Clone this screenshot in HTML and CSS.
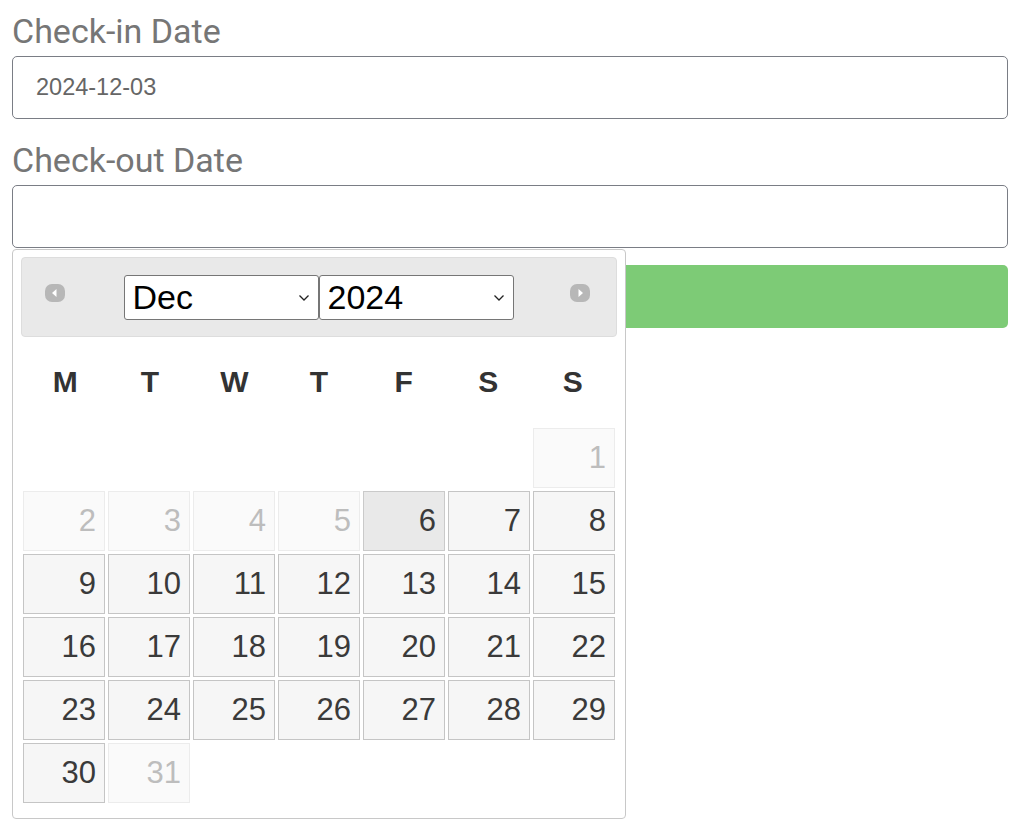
FILE: index.html
```html
<!DOCTYPE html>
<html>
<head>
    <title>Booking</title>
    <link rel="stylesheet" href="styles.css">
</head>
<body>
    <form class="booking">
        <label class="field-label" for="checkIn">Check-in Date</label>
        <input class="date-input" id="checkIn" type="text" value="2024-12-03">

        <label class="field-label" for="checkOut">Check-out Date</label>
        <input class="date-input" id="checkOut" type="text">

        <!-- the datepicker opens over the submit button -->
        <div class="stack">
            <button class="submit-btn" type="button"></button>

            <div class="datepicker">
                <div class="dp-header">
                    <span class="dp-nav">
                        <svg width="20" height="18" viewBox="0 0 20 18"><rect width="20" height="18" rx="7" fill="#b7b7b7"/><path d="M11.5 5 L7 9 L11.5 13 Z" fill="#fff"/></svg>
                    </span>
                    <div class="dp-selects">
                        <span class="dp-select">
                            <select class="month-select">
                                <option>Dec</option>
                            </select>
                            <svg class="chevron" width="12" height="8" viewBox="0 0 12 8"><path d="M1.5 1.5 L6 6 L10.5 1.5" fill="none" stroke="#222" stroke-width="1.3"/></svg>
                        </span>
                        <span class="dp-select">
                            <select class="year-select">
                                <option>2024</option>
                            </select>
                            <svg class="chevron" width="12" height="8" viewBox="0 0 12 8"><path d="M1.5 1.5 L6 6 L10.5 1.5" fill="none" stroke="#222" stroke-width="1.3"/></svg>
                        </span>
                    </div>
                    <span class="dp-nav">
                        <svg width="20" height="18" viewBox="0 0 20 18"><rect width="20" height="18" rx="7" fill="#b7b7b7"/><path d="M8.5 5 L13 9 L8.5 13 Z" fill="#fff"/></svg>
                    </span>
                </div>

                <div class="dp-names">
                    <span>M</span><span>T</span><span>W</span><span>T</span><span>F</span><span>S</span><span>S</span>
                </div>

                <div class="dp-days">
                    <span class="day off first">1</span>
                    <span class="day off">2</span>
                    <span class="day off">3</span>
                    <span class="day off">4</span>
                    <span class="day off">5</span>
                    <span class="day today">6</span>
                    <span class="day">7</span>
                    <span class="day">8</span>
                    <span class="day">9</span>
                    <span class="day">10</span>
                    <span class="day">11</span>
                    <span class="day">12</span>
                    <span class="day">13</span>
                    <span class="day">14</span>
                    <span class="day">15</span>
                    <span class="day">16</span>
                    <span class="day">17</span>
                    <span class="day">18</span>
                    <span class="day">19</span>
                    <span class="day">20</span>
                    <span class="day">21</span>
                    <span class="day">22</span>
                    <span class="day">23</span>
                    <span class="day">24</span>
                    <span class="day">25</span>
                    <span class="day">26</span>
                    <span class="day">27</span>
                    <span class="day">28</span>
                    <span class="day">29</span>
                    <span class="day">30</span>
                    <span class="day off">31</span>
                </div>
            </div>
        </div>
    </form>
</body>
</html>
```

FILE: styles.css
```css
body {
    margin: 0;
    padding: 12px 16px 0 12px;
    font-family: Roboto, "Liberation Sans", Arial, sans-serif;
    background-color: #ffffff;
}
.booking {
    display: flex;
    flex-direction: column;
}
.field-label {
    font-size: 34px;
    line-height: 39px;
    color: #767676;
    margin-bottom: 5px;
}
.date-input {
    box-sizing: border-box;
    height: 63px;
    margin: 0 0 22px 0;
    padding: 0 23px;
    border: 1.5px solid #7a7d85;
    border-radius: 5px;
    font-family: "Liberation Sans", Arial, sans-serif;
    font-size: 23.5px;
    color: #666;
    outline: none;
}
#checkOut {
    margin-bottom: 0;
}
.stack {
    display: grid;
}
.stack > * {
    grid-area: 1 / 1;
}
.submit-btn {
    align-self: start;
    height: 63px;
    margin-top: 17px;
    border: none;
    border-radius: 5px;
    background-color: #7dcb76;
    cursor: pointer;
}

/* datepicker */
.datepicker {
    justify-self: start;
    align-self: start;
    z-index: 1;
    box-sizing: border-box;
    width: 614px;
    height: 570px;
    margin-top: 1px;
    padding: 7px 8px;
    background-color: #fff;
    border: 1px solid #c8c8c8;
    border-radius: 4px;
    font-family: "Liberation Sans", Arial, sans-serif;
}
.dp-header {
    display: flex;
    align-items: center;
    justify-content: space-between;
    box-sizing: border-box;
    height: 80px;
    padding: 0 26px 0 23px;
    background-color: #e9e9e9;
    border: 1px solid #dddddd;
    border-radius: 4px;
}
.dp-nav {
    display: flex;
    width: 20px;
    height: 18px;
    margin-top: -8px;
}
.dp-selects {
    display: flex;
    justify-content: center;
    flex: 1;
    margin-left: 2px;
}
.dp-select {
    position: relative;
    display: inline-block;
}
.dp-select select {
    appearance: none;
    -webkit-appearance: none;
    box-sizing: border-box;
    width: 195px;
    height: 45px;
    padding: 0 8px;
    border: 1px solid #767676;
    border-radius: 3px;
    background-color: #fff;
    font-family: "Liberation Sans", Arial, sans-serif;
    font-size: 34px;
    color: #000;
}
.chevron {
    position: absolute;
    right: 9px;
    top: 19px;
    pointer-events: none;
}
.dp-names {
    display: grid;
    grid-template-columns: repeat(7, 1fr);
    height: 90px;
    align-items: center;
    padding: 0 2px;
}
.dp-names span {
    text-align: center;
    font-weight: bold;
    font-size: 30px;
    color: #333;
}
.dp-days {
    display: grid;
    grid-template-columns: repeat(7, 82px);
    grid-auto-rows: 60px;
    gap: 3px;
    padding: 1px 2px 0 2px;
}
.day {
    box-sizing: border-box;
    display: flex;
    align-items: center;
    justify-content: flex-end;
    padding-right: 8px;
    background-color: #f6f6f6;
    border: 1px solid #c5c5c5;
    font-size: 31px;
    color: #3a3a3a;
}
.day.first {
    grid-column-start: 7;
}
.day.off {
    background-color: #fafafa;
    border-color: #ececec;
    color: #bdbdbd;
}
.day.today {
    background-color: #e9e9e9;
    border-color: #cacaca;
}
```
